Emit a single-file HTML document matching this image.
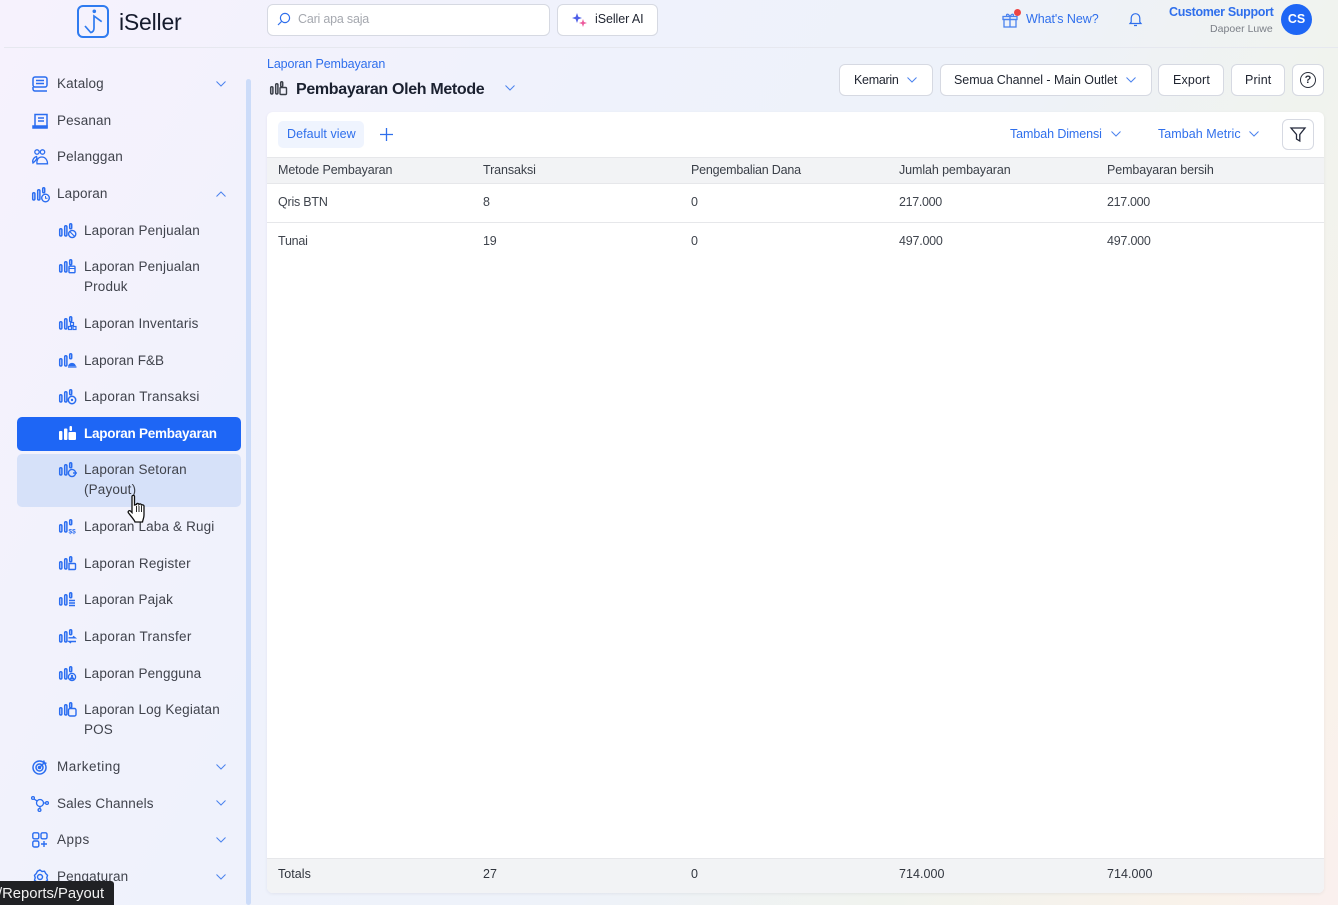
<!DOCTYPE html>
<html lang="id"><head><meta charset="utf-8"><title>Laporan Pembayaran</title>
<style>
*{box-sizing:border-box}
html,body{margin:0;padding:0}
body{width:1338px;height:905px;overflow:hidden;position:relative;font-family:"Liberation Sans",sans-serif;color:#374151;background:linear-gradient(118deg,#f6f2fd 0%,#eff2fc 35%,#eef2f9 58%,#f0f3ee 75%,#f9f2ea 92%,#faf0ee 100%)}
.t{position:absolute;white-space:nowrap;font-size:13px;line-height:18px}
.nav{color:#40434c;letter-spacing:.15px;font-size:13.5px}
.blue{color:#2f6fec}
svg{position:absolute;overflow:visible}
.btn{position:absolute;background:#fff;border:1px solid #d6d9e2;border-radius:6px;height:32px}
.th{color:#3a3f48;letter-spacing:-.1px;font-size:12.5px}
.td{color:#3f444d;letter-spacing:-.22px;font-size:12.5px}
.tot{color:#30353e;letter-spacing:.04px;font-size:12.5px}
.bk{color:#1f2430;letter-spacing:.14px;font-size:12.5px}
</style></head><body>
<svg width="0" height="0" style="position:absolute"><defs>
<symbol id="bars" viewBox="0 0 20 18"><g fill="none" stroke="currentColor" stroke-width="1.500"><rect x="1.700" y="6.700" width="2.200" height="7.300" rx="1.100"/><rect x="6.700" y="3.700" width="2.200" height="10.300" rx="1.100"/><rect x="11.700" y="1.700" width="2" height="5" rx="1"/></g></symbol>
<symbol id="chev" viewBox="0 0 12 8"><path d="M1.500 1.500 6 6l4.500-4.500" fill="none" stroke="currentColor" stroke-width="1"/></symbol>
</defs></svg>

<!-- dividers -->
<div style="position:absolute;left:4px;top:47px;width:1334px;height:1px;background:#e6e8ef"></div>

<!-- logo -->
<svg style="left:77px;top:5px" width="33" height="33" viewBox="0 0 33 33"><rect x="1" y="1" width="30" height="31" rx="5" fill="none" stroke="#2f7bf0" stroke-width="2"/><circle cx="17.300" cy="6.300" r="1.800" fill="#2f7bf0"/><path d="M8 21l5.700 6.500Q17 27 17 23V11l7.700 5.700" fill="none" stroke="#2f7bf0" stroke-width="1.700"/></svg>
<div class="t" style="left:119px;top:7px;font-size:23px;line-height:30px;color:#151b2d;letter-spacing:-.2px">iSeller</div>

<!-- search -->
<div class="btn" style="left:267px;top:4px;width:283px"></div>
<svg style="left:277px;top:12px" width="14" height="14" viewBox="0 0 14 14"><circle cx="8" cy="6" r="4.600" fill="none" stroke="#2f6fec" stroke-width="1.200"/><path d="M4.500 9.500 1 13" stroke="#2f6fec" stroke-width="1.200"/></svg>
<div class="t" style="left:298px;top:10px;color:#a5a8af;letter-spacing:-.2px;font-size:12.5px">Cari apa saja</div>
<div class="btn" style="left:557px;top:4px;width:101px"></div>
<svg style="left:572px;top:12px" width="15" height="15" viewBox="0 0 15 15"><path d="M5 1l1.300 3.700L10 6 6.300 7.300 5 11 3.700 7.300 0 6l3.700-1.300z" fill="#4f5fe8"/><path d="M11 7l1 3 3 1-3 1-1 3-1-3-3-1 3-1z" fill="#ec5a9c"/></svg>
<div class="t bk" style="left:595px;top:10px;letter-spacing:-.08px">iSeller AI</div>

<!-- top right -->
<svg style="left:1002px;top:12px" width="16" height="16" viewBox="0 0 16 16" fill="none" stroke="#4a82ee" stroke-width="1.300"><rect x="1" y="4.500" width="14" height="3"/><rect x="2" y="7.500" width="12" height="7.500"/><path d="M8 4.500V15M8 4.500C6 1 3.500 2 5 4.500M8 4.500c2-3.500 4.500-2.500 3 0"/></svg>
<div style="position:absolute;left:1014px;top:9px;width:7px;height:7px;border-radius:50%;background:#ee4444"></div>
<div class="t blue" style="left:1026px;top:10px;letter-spacing:-.06px;font-size:12.5px">What's New?</div>
<svg style="left:1129px;top:12px" width="13" height="15" viewBox="0 0 13 15" fill="none" stroke="#2f6fec" stroke-width="1.200"><path d="M1 11.500h11l-1.200-1.500V6a4.300 4.300 0 0 0-8.600 0v4zM5 13.500h3"/></svg>
<div class="t blue" style="left:1169px;top:3px;font-weight:bold;letter-spacing:-.33px;font-size:12.5px">Customer Support</div>
<div class="t" style="left:1210px;top:20px;color:#7b7f87;font-size:10.500px;letter-spacing:.03px">Dapoer Luwe</div>
<div style="position:absolute;left:1281px;top:4px;width:31px;height:31px;border-radius:50%;background:#1e66f5;color:#fff;font-weight:bold;font-size:12.500px;line-height:31px;text-align:center">CS</div>

<!-- sidebar scrollbar -->
<div style="position:absolute;left:246px;top:79px;width:5px;height:826px;background:#ccdcf9;border-radius:3px"></div>

<!-- active / hover -->
<div style="position:absolute;left:17px;top:417px;width:224px;height:34px;background:#1e66f5;border-radius:5px"></div>
<div style="position:absolute;left:17px;top:454px;width:224px;height:53px;background:#d6e1f9;border-radius:5px"></div>

<!-- top nav -->
<svg style="left:32px;top:76px" width="16" height="16" viewBox="0 0 16 16" fill="none" stroke="#2a6df0" stroke-width="1.500"><rect x="1" y="1" width="14" height="10" rx="2"/><path d="M4 4.500h8M4 7.500h8M1 11v2a2 2 0 0 0 2 2h12"/></svg>
<div class="t nav" style="left:57px;top:75px">Katalog</div>
<svg style="left:215px;top:80px;color:#4a82ee" width="12" height="8"><use href="#chev"/></svg>
<svg style="left:32px;top:113px" width="16" height="16" viewBox="0 0 16 16" fill="none" stroke="#2a6df0" stroke-width="1.500"><path d="M3 13V1.500h12V14.500H1.500"/><path d="M6 5h6M6 8h6"/><path d="M1 13h14v2H1z" fill="#2a6df0"/></svg>
<div class="t nav" style="left:57px;top:112px">Pesanan</div>
<svg style="left:32px;top:149px" width="16" height="16" viewBox="0 0 16 16" fill="none" stroke="#2a6df0" stroke-width="1.300"><circle cx="5" cy="3" r="2.200"/><circle cx="10.500" cy="3" r="2.200"/><path d="M5 14.800c-.5-3.500 1-6.800 4.700-6.800s5.800 3 5.800 6.800zM1 14c-1-2.500.5-5.500 3.500-6.500 1 1.500-.5 4-3.500 6.500z"/></svg>
<div class="t nav" style="left:57px;top:148px">Pelanggan</div>
<svg style="left:31px;top:186px;color:#2a6df0" width="20" height="18"><use href="#bars"/><circle cx="14.500" cy="12" r="3.800" fill="none" stroke="#2a6df0" stroke-width="1.400"/><path d="M14.500 10v2.200h2" fill="none" stroke="#2a6df0"/></svg>
<div class="t nav" style="left:57px;top:185px">Laporan</div>
<svg style="left:215px;top:190px;color:#4a82ee;transform:scaleY(-1)" width="12" height="8"><use href="#chev"/></svg>

<!-- sub items -->
<svg style="left:58px;top:222px;color:#2a6df0" width="20" height="18"><use href="#bars"/><circle cx="14.200" cy="12" r="3.600" fill="none" stroke="#2a6df0" stroke-width="1.400"/><path d="M11.700 9.500l5 5" stroke="#2a6df0" stroke-width="1.200"/></svg>
<div class="t nav" style="left:84px;top:222px">Laporan Penjualan</div>
<svg style="left:58px;top:258px;color:#2a6df0" width="20" height="18"><use href="#bars"/><rect x="11" y="8.200" width="6" height="6.500" rx="1" fill="none" stroke="#2a6df0" stroke-width="1.400"/><path d="M11 10.500h6" stroke="#2a6df0"/></svg>
<div class="t nav" style="left:84px;top:258px">Laporan Penjualan</div>
<div class="t nav" style="left:84px;top:278px">Produk</div>
<svg style="left:58px;top:315px;color:#2a6df0" width="20" height="18"><use href="#bars"/><rect x="10.500" y="11.500" width="3" height="3" fill="none" stroke="#2a6df0" stroke-width="1.200"/><rect x="15" y="11.500" width="3" height="3" fill="none" stroke="#2a6df0" stroke-width="1.200"/><rect x="12.500" y="7.500" width="3" height="3" fill="none" stroke="#2a6df0" stroke-width="1.200"/></svg>
<div class="t nav" style="left:84px;top:315px">Laporan Inventaris</div>
<svg style="left:58px;top:352px;color:#2a6df0" width="20" height="18"><use href="#bars"/><path d="M11 13.500a3.300 3.300 0 0 1 6 0zM10 15h8.500" fill="#2a6df0" stroke="#2a6df0" stroke-width="1.300"/></svg>
<div class="t nav" style="left:84px;top:352px;letter-spacing:.05px">Laporan F&amp;B</div>
<svg style="left:58px;top:388px;color:#2a6df0" width="20" height="18"><use href="#bars"/><circle cx="14" cy="12" r="3.700" fill="none" stroke="#2a6df0" stroke-width="1.500"/><circle cx="14" cy="12" r="1.200" fill="#2a6df0"/></svg>
<div class="t nav" style="left:84px;top:388px;letter-spacing:.27px">Laporan Transaksi</div>
<svg style="left:58px;top:425px" width="20" height="18" viewBox="0 0 20 18" fill="#fff"><rect x="1" y="6" width="3.400" height="9" rx="1"/><rect x="6" y="3.500" width="3.400" height="11.500" rx="1"/><rect x="11.500" y="1" width="2.500" height="5" rx="1"/><rect x="10.500" y="7" width="7.500" height="8" rx="1"/></svg>
<div class="t nav" style="left:84px;top:425px;color:#fff;font-weight:bold;letter-spacing:-.25px">Laporan Pembayaran</div>
<svg style="left:58px;top:461px;color:#2a6df0" width="20" height="18"><use href="#bars"/><circle cx="14" cy="12" r="3.600" fill="none" stroke="#2a6df0" stroke-width="1.400"/><path d="M15 12h4" stroke="#2a6df0" stroke-width="1.400"/></svg>
<div class="t nav" style="left:84px;top:461px">Laporan Setoran</div>
<div class="t nav" style="left:84px;top:481px">(Payout)</div>
<svg style="left:58px;top:518px;color:#2a6df0" width="20" height="18"><use href="#bars"/><text x="10.500" y="15.500" font-size="6.500" font-weight="bold" fill="#2a6df0" font-family="Liberation Sans">$$</text></svg>
<div class="t nav" style="left:84px;top:518px">Laporan Laba &amp; Rugi</div>
<svg style="left:58px;top:555px;color:#2a6df0" width="20" height="18"><use href="#bars"/><path d="M11 8.500h5.500a1 1 0 0 1 1 1v4a1 1 0 0 1-1 1H11z" fill="none" stroke="#2a6df0" stroke-width="1.400"/></svg>
<div class="t nav" style="left:84px;top:555px;letter-spacing:.2px">Laporan Register</div>
<svg style="left:58px;top:591px;color:#2a6df0" width="20" height="18"><use href="#bars"/><path d="M11 9.500h6M11 12h6M11 14.500h6" stroke="#2a6df0" stroke-width="1.400"/></svg>
<div class="t nav" style="left:84px;top:591px">Laporan Pajak</div>
<svg style="left:58px;top:628px;color:#2a6df0" width="20" height="18"><use href="#bars"/><path d="M10.500 9.800h6.500l-2-1.500M18 13.500h-7l2 1.500" fill="none" stroke="#2a6df0" stroke-width="1.400"/></svg>
<div class="t nav" style="left:84px;top:628px;letter-spacing:.3px">Laporan Transfer</div>
<svg style="left:58px;top:665px;color:#2a6df0" width="20" height="18"><use href="#bars"/><circle cx="14" cy="12" r="3.600" fill="none" stroke="#2a6df0" stroke-width="1.300"/><circle cx="14" cy="11" r="1.200" fill="#2a6df0"/><path d="M12 14.500a2 2 0 0 1 4 0" fill="#2a6df0" stroke="#2a6df0"/></svg>
<div class="t nav" style="left:84px;top:665px">Laporan Pengguna</div>
<svg style="left:58px;top:701px;color:#2a6df0" width="20" height="18"><use href="#bars"/><rect x="10.500" y="7.500" width="7.500" height="7.500" rx="1.500" fill="none" stroke="#2a6df0" stroke-width="1.400"/></svg>
<div class="t nav" style="left:84px;top:701px">Laporan Log Kegiatan</div>
<div class="t nav" style="left:84px;top:721px">POS</div>

<!-- bottom nav -->
<svg style="left:32px;top:759px" width="16" height="16" viewBox="0 0 16 16" fill="none" stroke="#2a6df0" stroke-width="1.500"><circle cx="7.500" cy="8.500" r="6.500"/><circle cx="7.500" cy="8.500" r="3.500"/><circle cx="7.500" cy="8.500" r="1" fill="#2a6df0"/><path d="M8 8l5-5M12 1.500l-.3 2.500 2.800.2"/></svg>
<div class="t nav" style="left:57px;top:758px;letter-spacing:.5px">Marketing</div>
<svg style="left:215px;top:763px;color:#4a82ee" width="12" height="8"><use href="#chev"/></svg>
<svg style="left:31px;top:796px" width="18" height="16" viewBox="0 0 18 16" fill="none" stroke="#2a6df0" stroke-width="1.300"><circle cx="2" cy="2" r="1.400"/><circle cx="9" cy="7" r="3.500"/><circle cx="16" cy="7" r="1.400"/><circle cx="8.500" cy="14" r="1.400"/><path d="M3 3l3.500 2.200M12.500 7h2M9 10.500v2"/></svg>
<div class="t nav" style="left:57px;top:795px">Sales Channels</div>
<svg style="left:215px;top:799px;color:#4a82ee" width="12" height="8"><use href="#chev"/></svg>
<svg style="left:32px;top:832px" width="16" height="16" viewBox="0 0 16 16" fill="none" stroke="#2a6df0" stroke-width="1.400"><rect x=".8" y=".8" width="6" height="6" rx="1.500"/><rect x="9" y=".8" width="6" height="6" rx="1.500"/><rect x=".8" y="9" width="6" height="6" rx="1.500"/><path d="M12 9v6M9 12h6"/></svg>
<div class="t nav" style="left:57px;top:831px;letter-spacing:.5px">Apps</div>
<svg style="left:215px;top:836px;color:#4a82ee" width="12" height="8"><use href="#chev"/></svg>
<svg style="left:32px;top:869px" width="16" height="16" viewBox="0 0 16 16" fill="none" stroke="#2a6df0" stroke-width="1.400"><path d="M8 1l2 1.500 2.500-.3 1.200 2.300 1.800 1.800-.7 2.500.7 2.400-2 1.500-1 2.300H5.500l-1-2.300-2-1.500.7-2.400-.7-2.500 1.800-1.800L5.500 2.200z"/><circle cx="8" cy="8" r="2.500"/></svg>
<div class="t nav" style="left:57px;top:868px">Pengaturan</div>
<svg style="left:215px;top:873px;color:#4a82ee" width="12" height="8"><use href="#chev"/></svg>

<!-- page head -->
<div class="t blue" style="left:267px;top:55px;font-size:12.5px;letter-spacing:-.11px">Laporan Pembayaran</div>
<svg style="left:269px;top:80px;color:#3a3f48" width="20" height="18"><use href="#bars"/><rect x="11" y="7.500" width="6.500" height="7" rx="1" fill="none" stroke="#3a3f48" stroke-width="1.400"/></svg>
<div class="t" style="left:296px;top:80px;font-size:16px;line-height:20px;font-weight:bold;color:#1b2130;letter-spacing:-.33px">Pembayaran Oleh Metode</div>
<svg style="left:504px;top:84px;color:#4a82ee" width="12" height="8"><use href="#chev"/></svg>

<!-- buttons -->
<div class="btn" style="left:839px;top:64px;width:94px"></div>
<div class="t bk" style="left:854px;top:71px;letter-spacing:-.28px">Kemarin</div>
<svg style="left:906px;top:76px;color:#4a82ee" width="12" height="8"><use href="#chev"/></svg>
<div class="btn" style="left:940px;top:64px;width:212px"></div>
<div class="t bk" style="left:954px;top:71px;letter-spacing:-.05px">Semua Channel - Main Outlet</div>
<svg style="left:1125px;top:76px;color:#4a82ee" width="12" height="8"><use href="#chev"/></svg>
<div class="btn" style="left:1158px;top:64px;width:66px"></div>
<div class="t bk" style="left:1173px;top:71px">Export</div>
<div class="btn" style="left:1231px;top:64px;width:54px"></div>
<div class="t bk" style="left:1245px;top:71px">Print</div>
<div class="btn" style="left:1292px;top:64px;width:32px"></div>
<div style="position:absolute;left:1300px;top:72px;width:16px;height:16px;border:1.300px solid #2a2f3a;border-radius:50%;font-size:11px;font-weight:bold;line-height:14px;text-align:center;color:#2a2f3a">?</div>

<!-- card -->
<div style="position:absolute;left:267px;top:112px;width:1057px;height:781px;background:#fff;border-radius:6px;box-shadow:0 1px 3px rgba(60,70,90,.08)"></div>
<div style="position:absolute;left:278px;top:121px;width:86px;height:27px;background:#eff4fe;border-radius:5px"></div>
<div class="t blue" style="left:287px;top:125px;font-size:12.5px;letter-spacing:.05px">Default view</div>
<svg style="left:380px;top:128px" width="13" height="13"><path d="M6.500 0v13M0 6.500h13" stroke="#2f6fec" stroke-width="1.300"/></svg>
<div class="t blue" style="left:1010px;top:125px;font-size:12.5px;letter-spacing:-.09px">Tambah Dimensi</div>
<svg style="left:1110px;top:130px;color:#4a82ee" width="12" height="8"><use href="#chev"/></svg>
<div class="t blue" style="left:1158px;top:125px;font-size:12.5px;letter-spacing:.05px">Tambah Metric</div>
<svg style="left:1248px;top:130px;color:#4a82ee" width="12" height="8"><use href="#chev"/></svg>
<div class="btn" style="left:1282px;top:119px;width:32px;height:31px"></div>
<svg style="left:1290px;top:127px" width="16" height="15" viewBox="0 0 16 15" fill="none" stroke="#23283a" stroke-width="1.300"><path d="M1 1h14L9.800 7.500V14L6.500 12V7.500z"/></svg>

<!-- table -->
<div style="position:absolute;left:267px;top:157px;width:1057px;height:27px;background:#f2f3f5;border-top:1px solid #e6e7ea;border-bottom:1px solid #e6e7ea"></div>
<div class="t th" style="left:278px;top:161px">Metode Pembayaran</div>
<div class="t th" style="left:483px;top:161px">Transaksi</div>
<div class="t th" style="left:691px;top:161px;letter-spacing:-.2px">Pengembalian Dana</div>
<div class="t th" style="left:899px;top:161px">Jumlah pembayaran</div>
<div class="t th" style="left:1107px;top:161px">Pembayaran bersih</div>

<div class="t td" style="left:278px;top:193px">Qris BTN</div>
<div class="t td" style="left:483px;top:193px">8</div>
<div class="t td" style="left:691px;top:193px">0</div>
<div class="t td" style="left:899px;top:193px;letter-spacing:-.32px">217.000</div>
<div class="t td" style="left:1107px;top:193px;letter-spacing:-.32px">217.000</div>
<div style="position:absolute;left:267px;top:222px;width:1057px;height:1px;background:#e6e7ea"></div>
<div class="t td" style="left:278px;top:232px">Tunai</div>
<div class="t td" style="left:483px;top:232px">19</div>
<div class="t td" style="left:691px;top:232px">0</div>
<div class="t td" style="left:899px;top:232px">497.000</div>
<div class="t td" style="left:1107px;top:232px">497.000</div>

<div style="position:absolute;left:267px;top:858px;width:1057px;height:35px;background:#f2f3f5;border-top:1px solid #e6e7ea;border-radius:0 0 6px 6px"></div>
<div class="t tot" style="left:278px;top:865px">Totals</div>
<div class="t tot" style="left:483px;top:865px">27</div>
<div class="t tot" style="left:691px;top:865px">0</div>
<div class="t tot" style="left:899px;top:865px">714.000</div>
<div class="t tot" style="left:1107px;top:865px">714.000</div>

<!-- cursor -->
<svg style="left:124px;top:494px" width="24" height="30" viewBox="0 0 24 30"><path d="M8 2.500c0-1.500 2.500-1.500 2.500 0V11l2-.5v-.5c1-1 2.500-.5 2.500.5 1-1 2.500-.5 2.500.5 1-.5 2.500 0 2.500 1V21c0 3-1 4-1.500 7H11c-.5-2-5-7-6.500-9-1-1.500.5-3 2-2l1.500 1.500z" fill="#fff" stroke="#111" stroke-width="1.300"/><path d="M12.500 12v6M15 12v6M17.500 12v6" stroke="#111" stroke-width=".9"/></svg>

<!-- status tooltip -->
<div style="position:absolute;left:0;top:881px;width:114px;height:24px;background:#202124;border-radius:0 3px 0 0;color:#f2f2f2;font-size:14.800px;line-height:26px;white-space:nowrap;overflow:hidden"><span style="margin-left:-2px">/Reports/Payout</span></div>
</body></html>
